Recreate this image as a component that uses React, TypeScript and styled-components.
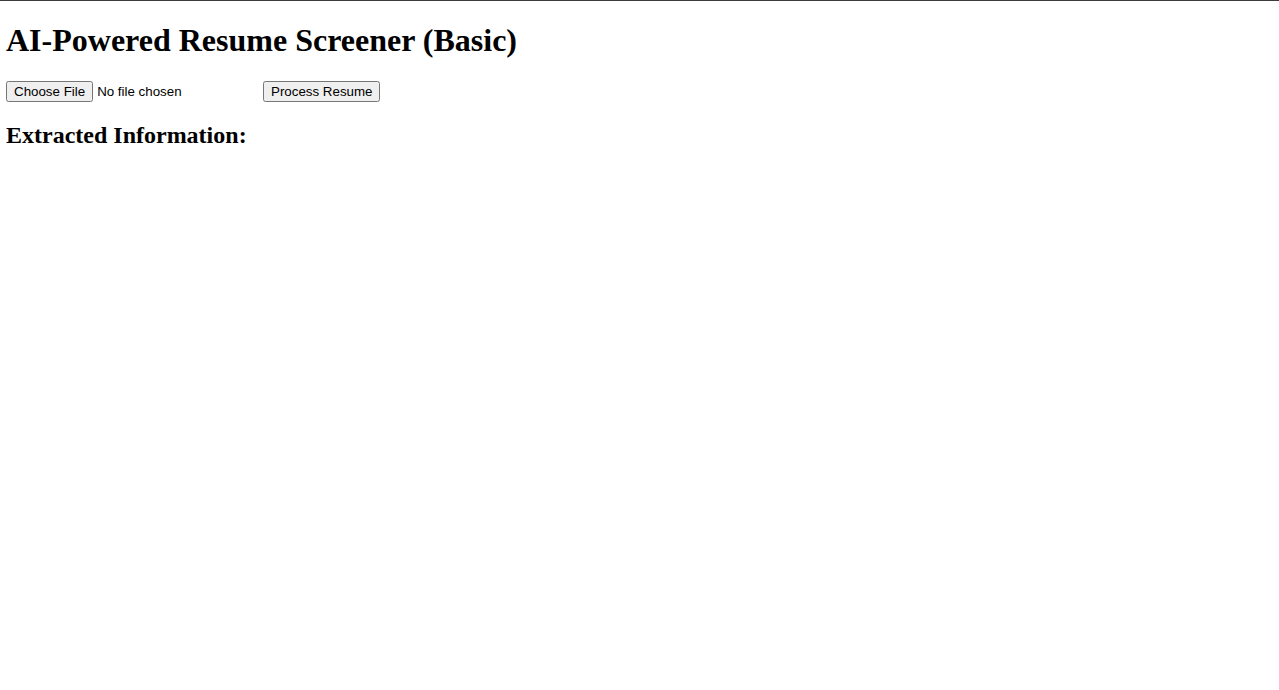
import React from "react";
import styled, { createGlobalStyle } from "styled-components";

const Global = createGlobalStyle`
  html, body { margin: 0; padding: 0; background: #fff; }
  body {
    border-top: 1px solid #3c3c3c;
    padding: 0 6px;
    font-family: "Liberation Serif", "Times New Roman", serif;
    color: #000;
  }
`;

const Title = styled.h1`
  font-family: "Liberation Serif", "Times New Roman", serif;
  font-size: 32px;
  font-weight: bold;
  margin: 21.44px 0 22px;
`;

const Form = styled.form`
  display: flex;
  align-items: center;
  margin: 0;
`;

const FileInput = styled.input`
  font-family: "Liberation Sans", Arial, sans-serif;
  font-size: 13.333px;
  width: 253px;
  margin: 0 4px 0 0;
`;

const SubmitButton = styled.button`
  font-family: "Liberation Sans", Arial, sans-serif;
  font-size: 13.333px;
`;

const SectionTitle = styled.h2`
  font-family: "Liberation Serif", "Times New Roman", serif;
  font-size: 24px;
  font-weight: bold;
  margin: 20px 0;
`;

export default function App() {
  return (
    <>
      <Global />
      <Title>AI-Powered Resume Screener (Basic)</Title>
      <Form onSubmit={(e) => e.preventDefault()}>
        <FileInput type="file" />
        <SubmitButton type="submit">Process Resume</SubmitButton>
      </Form>
      <SectionTitle>Extracted Information:</SectionTitle>
    </>
  );
}
